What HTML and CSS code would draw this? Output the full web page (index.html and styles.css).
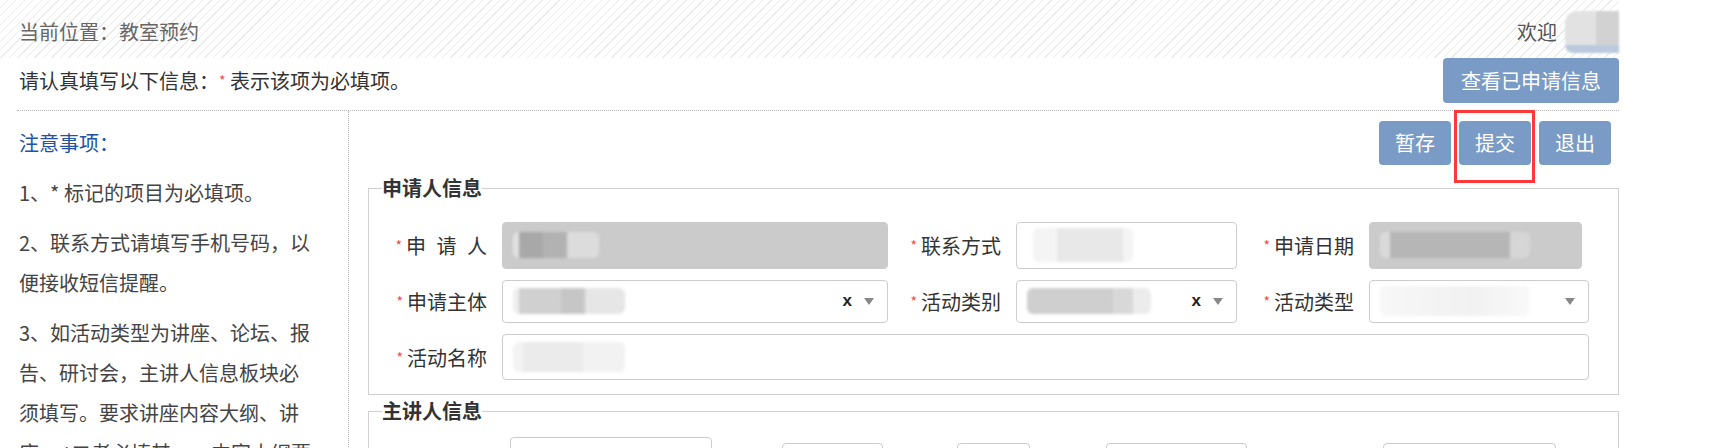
FILE: index.html
```html
<!DOCTYPE html>
<html lang="zh-CN">
<head>
  <meta charset="UTF-8">
  <title>教室预约</title>
  <link rel="stylesheet" href="styles.css">
</head>
<body>

<div class="page">
  <div class="topbar">
    <span class="crumb">当前位置：教室预约</span>
    <span class="welcome">欢迎 <span class="avatar"></span></span>
  </div>

  <div class="tipbar">
    <span class="tip">请认真填写以下信息：<i class="req">*</i> 表示该项为必填项。</span>
    <button class="btn btn-wide">查看已申请信息</button>
  </div>

  <div class="main">
    <div class="notes">
      <h4>注意事项：</h4>
      <p>1、* 标记的项目为必填项。</p>
      <p>2、联系方式请填写手机号码，以便接收短信提醒。</p>
      <p>3、如活动类型为讲座、论坛、报告、研讨会，主讲人信息板块必须填写。要求讲座内容大纲、讲座ppt二者必填其一；内容大纲要求不少于200字。</p>
    </div>

    <div class="form">
      <div class="actions">
        <button class="btn">暂存</button>
        <span class="mark"><button class="btn">提交</button><span class="mark-box"></span></span>
        <button class="btn">退出</button>
      </div>

      <fieldset>
        <legend>申请人信息</legend>
        <div class="grid">
          <label class="lbl"><i class="req">*</i><span class="spaced">申 请 人</span></label>
          <div class="field off"><span class="mask m-name"></span></div>
          <label class="lbl"><i class="req">*</i>联系方式</label>
          <div class="field"><span class="mask m-phone"></span></div>
          <label class="lbl"><i class="req">*</i>申请日期</label>
          <div class="field off f-date"><span class="mask m-date"></span></div>

          <label class="lbl"><i class="req">*</i>申请主体</label>
          <div class="field sel"><span class="mask m-org"></span><span class="clear">x</span><span class="caret"></span></div>
          <label class="lbl"><i class="req">*</i>活动类别</label>
          <div class="field sel"><span class="mask m-cat"></span><span class="clear">x</span><span class="caret"></span></div>
          <label class="lbl"><i class="req">*</i>活动类型</label>
          <div class="field sel"><span class="mask m-type"></span><span class="caret"></span></div>

          <label class="lbl"><i class="req">*</i>活动名称</label>
          <div class="field wide"><span class="mask m-title"></span></div>
        </div>
      </fieldset>

      <fieldset class="second">
        <legend>主讲人信息</legend>
        <div class="speaker">
          <div class="box b1"></div>
          <div class="box b2"></div>
          <div class="box b3"></div>
          <div class="box b4"></div>
          <div class="box b5"></div>
        </div>
      </fieldset>
    </div>
  </div>
</div>

</body>
</html>
```

FILE: styles.css
```css
* {
  box-sizing: border-box;
}

body {
  margin: 0;
  font-family: "Noto Sans CJK SC", "Microsoft YaHei", sans-serif;
  font-size: 20px;
  color: #333;
  background: #fff;
}

.page {
  width: 1619px;
}

.topbar {
  height: 58px;
  padding: 4px 0 0 19px;
  display: flex;
  align-items: center;
  justify-content: space-between;
  background: repeating-linear-gradient(135deg, #fff 0 5px, #ebebeb 5px 6px);
  color: #666;
}

.welcome {
  display: flex;
  align-items: center;
  gap: 8px;
  color: #555;
}

.avatar {
  width: 54px;
  height: 42px;
  margin-top: 2px;
  border-radius: 12px 2px 0 8px;
  background:
    linear-gradient(90deg, transparent 58%, #d2d2d2 58%) 0 0 / 100% 80% no-repeat,
    linear-gradient(#e2e2e2 80%, #bac9de 80%);
  filter: blur(1px);
}

.tipbar {
  height: 53px;
  margin-left: 17px;
  padding-left: 2px;
  display: flex;
  justify-content: space-between;
  align-items: flex-start;
  border-bottom: 1px dotted #bbb;
}

.tip {
  line-height: 45px;
}

.req {
  font-style: normal;
  color: #f44;
  font-size: 14px;
  vertical-align: 3px;
  margin-right: 4px;
}

.tip .req {
  margin-right: 0;
}

.btn {
  height: 44px;
  padding: 0 16px;
  border: none;
  border-radius: 4px;
  background: #7a9bc5;
  color: #fff;
  font: inherit;
  line-height: 44px;
}

.btn-wide {
  height: 45px;
  padding: 0 18px;
}

.main {
  display: flex;
  margin-left: 17px;
}

.notes {
  width: 331px;
  flex: none;
  padding: 12px 33px 0 2px;
  line-height: 40px;
  color: #444;
}

.notes h4 {
  margin: 0 0 10px;
  font-size: 20px;
  font-weight: normal;
  color: #2352a3;
}

.notes p {
  margin: 0 0 10px;
}

.form {
  flex: 1;
  min-height: 400px;
  padding: 10px 0 0 19px;
  border-left: 1px dotted #bbb;
}

.actions {
  display: flex;
  justify-content: flex-end;
  gap: 8px;
  padding-right: 8px;
}

.mark {
  position: relative;
  display: flex;
}

.mark-box {
  position: absolute;
  left: -5px;
  right: -4px;
  top: -11px;
  bottom: -18px;
  border: 3px solid #ff3838;
}

fieldset {
  margin: 11px 0 0;
  padding: 17px 0 9px 13px;
  border: 1px solid #cfcfcf;
  min-width: 0;
}

legend {
  padding: 0;
  line-height: 24px;
  font-weight: bold;
  color: #333;
}

fieldset.second {
  margin-top: 4px;
  padding-top: 14px;
}

.grid {
  margin-left: 7px;
  display: grid;
  grid-template-columns: 113px 386px 128px 221px 132px 220px;
  grid-auto-rows: 56px;
  align-items: center;
}

.lbl {
  text-align: right;
  padding-right: 15px;
  white-space: nowrap;
}

.spaced {
  word-spacing: 6px;
}

.field {
  height: 47px;
  padding: 0 10px;
  display: flex;
  align-items: center;
  border: 1px solid #ccc;
  border-radius: 4px;
  background: #fff;
}

.field.off {
  background: #cbcbcb;
  border-color: #cbcbcb;
}

.f-date {
  width: 213px;
}

.sel {
  height: 43px;
  padding-right: 13px;
}

.wide {
  grid-column: 2 / 7;
  height: 46px;
}

.clear {
  margin-left: auto;
  font-family: "Liberation Sans", Arial, sans-serif;
  font-weight: bold;
  font-size: 17px;
  color: #222;
}

.caret {
  margin-left: 12px;
  width: 0;
  height: 0;
  border-left: 5px solid transparent;
  border-right: 5px solid transparent;
  border-top: 7px solid #888;
}

.mask + .caret {
  margin-left: auto;
}

.mask {
  display: inline-block;
  height: 26px;
  border-radius: 6px;
  filter: blur(1.5px);
}

.m-name {
  width: 86px;
  background: linear-gradient(90deg, #e2e2e2 0 6px, #a8a8a8 6px 30px, #b2b2b2 30px 54px, #dcdcdc 54px);
}

.m-phone {
  width: 100px;
  margin-left: 6px;
  height: 34px;
  background: linear-gradient(90deg, #f4f4f4 0 24px, #e8e8e8 24px 90px, #f4f4f4 90px);
}

.m-date {
  width: 150px;
  background: linear-gradient(90deg, #dadada 0 10px, #b6b6b6 10px 130px, #d6d6d6 130px);
}

.m-org {
  width: 112px;
  background: linear-gradient(90deg, #eee 0 6px, #d0d0d0 6px 48px, #c6c6c6 48px 72px, #e6e6e6 72px);
}

.m-cat {
  width: 124px;
  background: linear-gradient(90deg, #cfcfcf 0 86px, #d8d8d8 86px 106px, #ececec 106px);
}

.m-type {
  width: 150px;
  height: 30px;
  background: linear-gradient(90deg, #f7f7f7, #f1f1f1 60%, #f9f9f9);
}

.m-title {
  width: 112px;
  height: 30px;
  background: linear-gradient(90deg, #f3f3f3 0 10px, #ebebeb 10px 70px, #f2f2f2 70px);
}

.speaker {
  display: flex;
  align-items: flex-start;
  padding-left: 128px;
}

.box {
  height: 46px;
  border: 1px solid #ccc;
  border-radius: 4px;
  margin-top: 6px;
  flex: none;
}

.b1 { width: 202px; margin-top: 0; }
.b2 { width: 101px; margin-left: 70px; }
.b3 { width: 73px; margin-left: 74px; }
.b4 { width: 141px; margin-left: 76px; }
.b5 { width: 173px; margin-left: 136px; }
```
